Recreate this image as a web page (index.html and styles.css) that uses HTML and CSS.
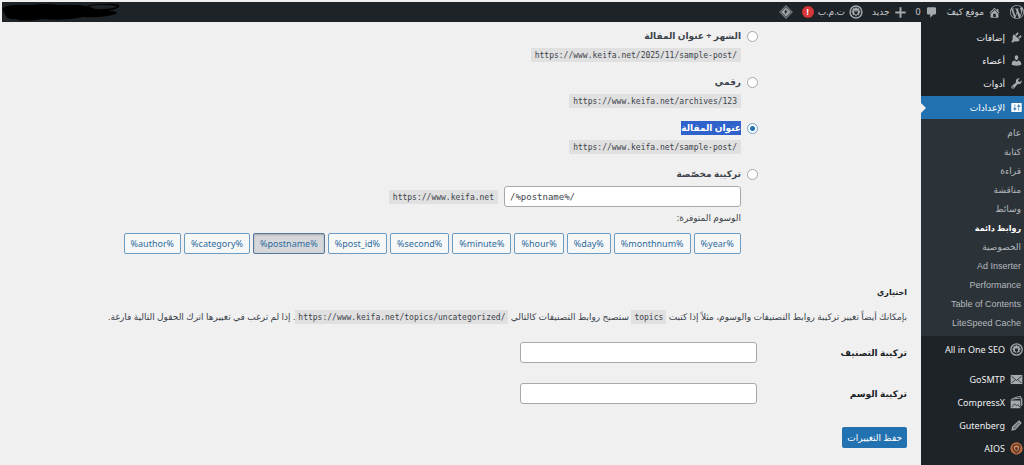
FILE: index.html
```html
<!DOCTYPE html>
<html lang="ar" dir="rtl">
<head>
<meta charset="utf-8">
<title>روابط دائمة</title>
<link rel="stylesheet" href="styles.css">
</head>
<body>
<header class="bar">
  <a class="bar-item" href="#" aria-label="WordPress"><svg class="icon-wp" viewBox="0 0 20 20"><path d="M20 10c0-5.51-4.49-10-10-10C4.48 0 0 4.49 0 10c0 5.52 4.48 10 10 10 5.51 0 10-4.48 10-10zM7.78 15.37L4.37 6.22c.55-.02 1.17-.08 1.17-.08.5-.06.44-1.13-.06-1.11 0 0-1.45.11-2.37.11-.18 0-.37 0-.58-.01C4.12 2.69 6.87 1.11 10 1.11c2.33 0 4.45.87 6.05 2.34-.68-.11-1.65.39-1.65 1.58 0 .74.45 1.36.9 2.1.35.61.55 1.36.55 2.46 0 1.49-1.4 5-1.4 5l-3.03-8.37c.54-.02.82-.17.82-.17.5-.05.44-1.25-.06-1.22 0 0-1.44.12-2.38.12-.87 0-2.33-.12-2.33-.12-.5-.03-.56 1.2-.06 1.22l.92.08 1.26 3.41zM17.41 10c.24-.64.74-1.87.43-4.25.7 1.29 1.05 2.71 1.05 4.25 0 3.29-1.73 6.24-4.4 7.78.97-2.59 1.94-5.2 2.92-7.78zM6.1 18.09C3.12 16.65 1.11 13.53 1.11 10c0-1.3.23-2.48.72-3.59C3.25 10.3 4.67 14.2 6.1 18.09zm4.03-6.63l2.58 6.98c-.86.29-1.76.45-2.71.45-.79 0-1.57-.11-2.29-.33.81-2.38 1.62-4.74 2.42-7.1z"/></svg></a>
  <a class="bar-item" href="#"><svg class="icon" viewBox="0 0 20 20"><path fill-rule="evenodd" d="M16 8.5l1.53 1.53-1.06 1.06L10 4.6l-6.47 6.49-1.06-1.06L10 2.5l4 4v-2h2v4zm-6-2.46l6 5.99V18H4v-5.97zM12 17v-5H8v5h4z"/></svg><span>موقع كيفَ</span></a>
  <a class="bar-item" href="#"><svg class="icon" viewBox="0 0 20 20"><path d="M5 2h10c1.1 0 2 .9 2 2v7c0 1.1-.9 2-2 2h-2l-5 5v-5H5c-1.1 0-2-.9-2-2V4c0-1.1.9-2 2-2z"/></svg><span>0</span></a>
  <a class="bar-item" href="#"><svg class="icon" viewBox="0 0 20 20"><path d="M18 8.500v3h-6.500v6.500h-3v-6.500H2v-3h6.500V2h3v6.500z"/></svg><span>جديد</span></a>
  <a class="bar-item" href="#"><svg class="icon-seo" viewBox="0 0 20 20"><circle cx="10" cy="10" r="8.500" fill="none" stroke="currentColor" stroke-width="2"/><path fill-rule="evenodd" d="M8.800 3.500h2.400l.5 1.700 1.700-.8 1.700 1.700-.8 1.600 1.900.6v2.400l-1.900.6.8 1.700-1.700 1.700-1.600-.8-.6 2h-2.400l-.6-2-1.700.8-1.700-1.700.8-1.700-1.900-.6V8.300l1.900-.6-.8-1.600 1.700-1.700 1.700.8zM7.600 8v3c0 1.200.8 1.800 1.700 2v2h1.400v-2c1-.2 1.700-.8 1.700-2V8h-1v1.500h-.9V8h-1v1.500h-.9V8z"/></svg><span>ت.م.ب</span><b class="alert">!</b></a>
  <a class="bar-item" href="#" aria-label="LiteSpeed"><svg class="icon-diamond" viewBox="0 0 20 20"><path fill-rule="evenodd" d="M10 0l10 10-10 10L0 10zM10 3l-7 7 7 7 7-7z" opacity=".6"/><path fill-rule="evenodd" d="M10 3.500l6.500 6.500-6.500 6.500L3.500 10zM11 5l-4 5.500h2.200L8 14l4.800-5H10z"/></svg></a>
  <svg class="redaction" viewBox="0 0 118 20"><path d="M1 6Q5 2 30 3Q40 1 58 3Q75 2 84 4Q90 2 102 2Q120 1 117 5Q112 9 100 9Q118 8 114 12Q100 16 82 15Q62 19 40 17Q20 20 14 17Q4 18 3 12Q0 9 1 6zM87 4Q92 8 100 7Q112 7 115 4Q100 2 87 4z" fill-rule="evenodd"/></svg>
</header>
<div class="page">
  <nav class="menu">
    <a href="#"><svg class="icon" viewBox="0 0 20 20"><path d="M13.110 4.360L9.870 7.600 8 5.730l3.240-3.240c.35-.34 1.050-.2 1.560.32.52.51.66 1.210.31 1.550zm-8 1.770l.91-1.120 9.010 9.010-1.190.84c-.71.71-2.630 1.160-3.820 1.160H6.140L4.900 17.260c-.59.59-1.540.59-2.120 0-.59-.58-.59-1.530 0-2.120l1.240-1.240v-3.880c0-1.130.4-3.190 1.090-3.890zm7.260 3.970l3.240-3.240c.34-.35 1.040-.21 1.550.31.52.51.66 1.210.31 1.550l-3.240 3.250z"/></svg>إضافات</a>
    <a href="#"><svg class="icon" viewBox="0 0 20 20"><path d="M10 9.250c-2.270 0-2.730-3.440-2.730-3.440C7 4.020 7.820 2 9.970 2c2.160 0 2.980 2.020 2.710 3.810 0 0-.41 3.440-2.680 3.440zm0 2.570L12.720 10c2.390 0 4.520 2.330 4.520 4.530v2.490s-3.650 1.130-7.240 1.130c-3.650 0-7.240-1.130-7.240-1.130v-2.490c0-2.250 1.940-4.480 4.470-4.480z"/></svg>أعضاء</a>
    <a href="#"><svg class="icon" viewBox="0 0 20 20"><path d="M16.680 9.770c-1.340 1.340-3.300 1.670-4.950.99l-5.410 6.520c-.99.99-2.590.99-3.580 0s-.99-2.590 0-3.570l6.520-5.420c-.68-1.650-.35-3.610.99-4.950 1.280-1.280 3.120-1.620 4.720-1.060l-2.890 2.890 2.820 2.820 2.860-2.870c.53 1.580.18 3.390-1.080 4.650zM3.810 16.210c.4.39 1.040.39 1.430 0 .4-.4.4-1.040 0-1.430-.39-.4-1.030-.4-1.430 0-.39.39-.39 1.030 0 1.430z"/></svg>أدوات</a>
    <a class="current" href="#"><svg class="icon" viewBox="0 0 20 20"><path d="M18 16V4c0-.55-.45-1-1-1H3c-.55 0-1 .45-1 1v12c0 .55.45 1 1 1h14c.55 0 1-.45 1-1zM8 11h1c.55 0 1 .45 1 1s-.45 1-1 1H8v1.500c0 .28-.22.5-.5.5s-.5-.22-.5-.5V13H6c-.55 0-1-.45-1-1s.45-1 1-1h1V5.500c0-.28.22-.5.5-.5s.5.22.5.5V11zm5-2h-1c-.55 0-1-.45-1-1s.45-1 1-1h1V5.500c0-.28.22-.5.5-.5s.5.22.5.5V7h1c.55 0 1 .45 1 1s-.45 1-1 1h-1v5.500c0 .28-.22.5-.5.5s-.5-.22-.5-.5V9z"/></svg>الإعدادات</a>
    <div class="submenu">
      <a href="#">عام</a>
      <a href="#">كتابة</a>
      <a href="#">قراءة</a>
      <a href="#">مناقشة</a>
      <a href="#">وسائط</a>
      <a class="active" href="#">روابط دائمة</a>
      <a href="#">الخصوصية</a>
      <a href="#">Ad Inserter</a>
      <a href="#">Performance</a>
      <a href="#">Table of Contents</a>
      <a href="#">LiteSpeed Cache</a>
    </div>
    <a class="group-end" href="#"><svg class="icon" viewBox="0 0 20 20"><circle cx="10" cy="10" r="8.800" fill="none" stroke="currentColor" stroke-width="2"/><path fill-rule="evenodd" d="M8.800 3.500h2.400l.5 1.700 1.700-.8 1.700 1.700-.8 1.600 1.900.6v2.400l-1.900.6.8 1.700-1.700 1.700-1.600-.8-.6 2h-2.400l-.6-2-1.700.8-1.700-1.700.8-1.700-1.900-.6V8.300l1.900-.6-.8-1.600 1.700-1.700 1.700.8zM7.600 8v3c0 1.200.8 1.800 1.700 2v2h1.400v-2c1-.2 1.700-.8 1.700-2V8h-1v1.500h-.9V8h-1v1.500h-.9V8z"/></svg>All in One SEO</a>
    <a href="#"><svg class="icon" viewBox="0 0 20 20"><path d="M1 3h18v14H1z"/><path d="M2.500 5L10 11.500 17.500 5M2.500 15.500l5-5M17.500 15.500l-5-5" fill="none" stroke="#1d2327" stroke-width="1.300"/></svg>GoSMTP</a>
    <a href="#"><svg class="icon" viewBox="0 0 20 20"><path d="M4 4L16 0l1 3M2 7V5l15-2v2" fill="none" stroke="currentColor" stroke-width="1.400"/><path d="M1 7h15v12H1zM17 4h2v11h-2z"/><path d="M3 17l4-5 3 3 2-2 3 4" fill="none" stroke="#1d2327" stroke-width="1.200"/></svg>CompressX</a>
    <a href="#"><svg class="icon" viewBox="0 0 20 20"><path fill-rule="evenodd" d="M14 2l4 4L8.500 16.500 2 18l1.500-6.500zM13 5l-8 8 .8 1.500 1.700.7 8-8.700z"/><path d="M5 13l8-8 2.500 2.500-8 8z" opacity=".65"/></svg>Gutenberg</a>
    <a href="#"><svg class="icon" viewBox="0 0 20 20"><circle cx="10" cy="10" r="9.500" fill="#b8693f"/><path d="M10 3l6 2v4c0 4-2.500 6.500-6 8.500C6.500 15.500 4 13 4 9V5z" fill="#51352b"/><path d="M10 5l4 1.500V9c0 3-1.700 4.500-4 6-2.300-1.500-4-3-4-6V6.500z" fill="#d98a5c"/><path d="M8 8h4v2l-1 3H9l-1-3z" fill="#51352b"/></svg>AIOS</a>
  </nav>
  <main class="content">
    <form>
      <div class="structures">
        <label class="choice"><input type="radio" name="structure"><span>الشهر + عنوان المقالة</span></label>
        <code class="example" dir="ltr">https://www.keifa.net/2025/11/sample-post/</code>
        <label class="choice"><input type="radio" name="structure"><span>رقمي</span></label>
        <code class="example" dir="ltr">https://www.keifa.net/archives/123</code>
        <label class="choice"><input type="radio" name="structure" checked><span class="selected">عنوان المقالة</span></label>
        <code class="example" dir="ltr">https://www.keifa.net/sample-post/</code>
        <label class="choice"><input type="radio" name="structure"><span>تركيبة مخصّصة</span></label>
        <div class="custom">
          <input class="text code-text" type="text" dir="ltr" value="/%postname%/" aria-label="تركيبة مخصّصة">
          <code dir="ltr">https://www.keifa.net</code>
        </div>
        <p class="available">الوسوم المتوفرة:</p>
        <div class="tags">
          <button type="button">%year%</button>
          <button type="button">%monthnum%</button>
          <button type="button">%day%</button>
          <button type="button">%hour%</button>
          <button type="button">%minute%</button>
          <button type="button">%second%</button>
          <button type="button">%post_id%</button>
          <button type="button" class="pressed" aria-pressed="true">%postname%</button>
          <button type="button">%category%</button>
          <button type="button">%author%</button>
        </div>
      </div>
      <h2>اختياري</h2>
      <p class="hint">بإمكانك أيضاً تغيير تركيبة روابط التصنيفات والوسوم، مثلاً إذا كتبت <code dir="ltr">topics</code> ستصبح روابط التصنيفات كالتالي <code dir="ltr">https://www.keifa.net/topics/uncategorized/</code>. إذا لم ترغب في تغييرها اترك الحقول التالية فارغة.</p>
      <div class="fields">
        <label for="category-base">تركيبة التصنيف</label>
        <input class="text" id="category-base" type="text" dir="ltr">
        <label for="tag-base">تركيبة الوسم</label>
        <input class="text" id="tag-base" type="text" dir="ltr">
      </div>
      <button class="save" type="submit">حفظ التغييرات</button>
    </form>
  </main>
</div>
</body>
</html>
```
FILE: styles.css
```css
* { box-sizing: border-box; }

body {
  display: flex;
  flex-direction: column;
  min-height: 100vh;
  margin: 0;
  padding: 2px 0 0 2px;
  background: #f0f0f1;
  color: #3c434a;
  font-family: "Noto Sans", "DejaVu Sans", sans-serif;
  font-size: 9px;
  line-height: 14px;
}

a { color: inherit; text-decoration: none; }
svg { display: block; flex: none; fill: currentColor; }
input, button { font: inherit; color: inherit; margin: 0; }

.bar {
  display: flex;
  align-items: center;
  gap: 9px;
  height: 20px;
  background: #1d2327;
  color: #c9cccf;
}
.bar-item { display: flex; align-items: center; gap: 4px; white-space: nowrap; }
.bar-item svg { color: #a7aaad; }
.icon { width: 13px; height: 13px; }
.icon-wp { width: 14px; height: 14px; }
.icon-seo { width: 14px; height: 14px; }
.icon-diamond { width: 14px; height: 14px; }
.alert {
  width: 12px;
  border-radius: 6px;
  background: #d63638;
  color: #fff;
  font-size: 8px;
  line-height: 12px;
  text-align: center;
}
.redaction { width: 118px; height: 20px; margin-right: auto; fill: #000; }

.page { display: flex; flex: 1; }

.menu {
  flex: none;
  width: 103px;
  padding-top: 4px;
  background: #1d2327;
  color: #f0f0f1;
}
.menu > a {
  display: flex;
  align-items: center;
  gap: 5px;
  height: 23px;
  padding-right: 1px;
}
.menu > a svg { color: #a7aaad; }
.menu > .current { position: relative; background: #2271b1; color: #fff; margin-top: 1px; }
.menu > .current svg { color: #fff; }
.current::after {
  content: "";
  position: absolute;
  left: 0;
  top: 7px;
  border: 5px solid transparent;
  border-left-color: #f0f0f1;
  border-right-width: 0;
}
.menu > .group-end { margin: 2px 0 7px; }

.submenu {
  padding: 5px 3px 3px 0;
  background: #2c3338;
  color: #b4b9be;
  font-family: "Liberation Sans", "DejaVu Sans", sans-serif;
}
.submenu a { display: block; line-height: 19px; }
.submenu .active { color: #fff; font-size: 8px; font-weight: bold; }

.content { flex: 1; min-width: 0; padding: 7px 14px 16px 16px; }

code {
  padding: 3px 4px 2px;
  background: #e0e0e1;
  font: 8px/9px "DejaVu Sans Mono", monospace;
  white-space: nowrap;
}

.structures {
  display: flex;
  flex-direction: column;
  align-items: flex-start;
  padding-right: 149px;
}
.choice {
  display: flex;
  align-items: center;
  gap: 6px;
  height: 14px;
  font-weight: bold;
}
.choice input {
  appearance: none;
  width: 11px;
  height: 11px;
  border: 1px solid #a5a8ac;
  border-radius: 50%;
  background: #fff;
}
.choice input:checked {
  border-color: #6fa3cf;
  background: radial-gradient(circle, #2271b1 0 2px, #fff 3px);
}
.selected { background: #3062cc; color: #fff; }
.example { margin: 5px 17px 13px 0; }

.text {
  width: 237px;
  height: 21px;
  padding: 0 5px;
  border: 1px solid #a5a8ac;
  border-radius: 3px;
  background: #fff;
}
.custom {
  display: flex;
  align-items: center;
  gap: 6px;
  margin: 5px 17px 4px 0;
}
.code-text { font-family: "DejaVu Sans Mono", monospace; }
.available { margin: 0 17px 8px 0; }

.tags {
  display: flex;
  flex-wrap: wrap;
  gap: 3px;
  margin-right: 17px;
}
.tags button {
  height: 21px;
  padding: 0 6px;
  border: 1px solid #6b9cc3;
  border-radius: 2px;
  background: #f6f7f7;
  color: #2f6c9e;
}
.tags .pressed {
  border-color: #55779a;
  background: #d5d7da;
  box-shadow: inset 0 1px 2px #a5a8ac;
}

h2 { margin: 31px 0 11px; color: #1d2327; font-size: 8px; line-height: 14px; }
.hint { margin: 0; }
.hint code { padding: 3px 3px 2px; }

.fields {
  display: grid;
  grid-template-columns: 150px 1fr;
  row-gap: 20px;
  align-items: center;
  margin: 18px 0 23px;
}
.fields label { color: #1d2327; font-weight: bold; }

.save {
  height: 21px;
  padding: 0 5px;
  border: 0;
  border-radius: 2px;
  background: #2271b1;
  color: #fff;
}
```
